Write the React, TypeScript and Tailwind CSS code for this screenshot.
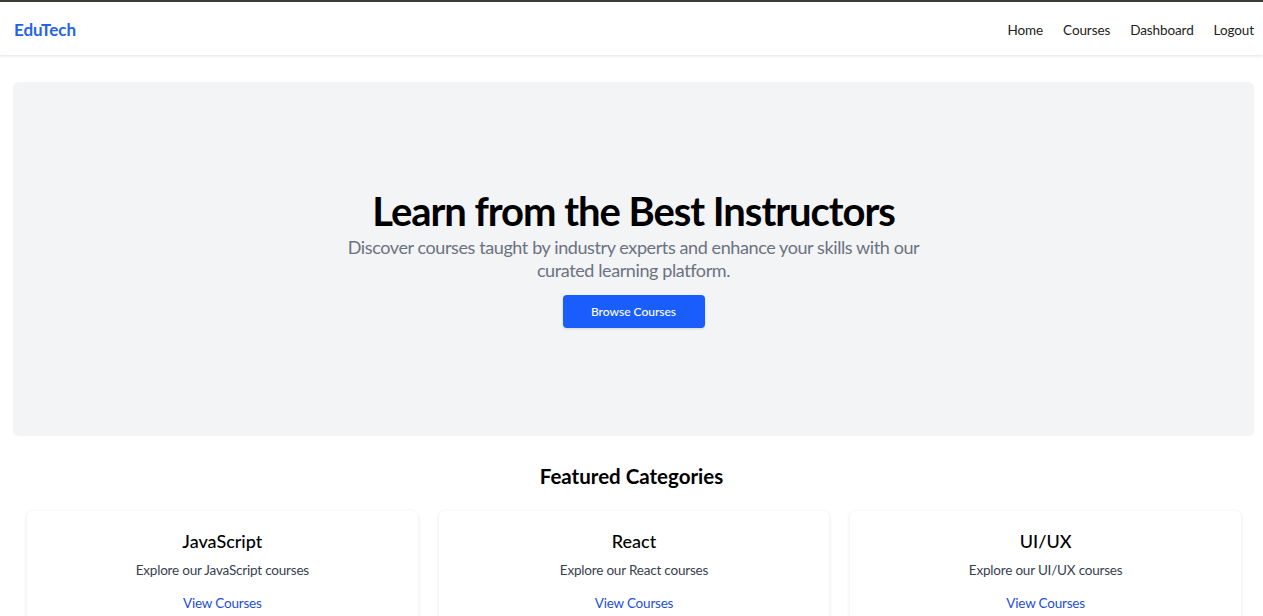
export default function App() {
  const categories = ['JavaScript', 'React', 'UI/UX'];

  return (
    <div className="min-h-screen bg-white font-['Lato',sans-serif] text-black">
      <div className="h-[2px] bg-[#3b3d39]" />
      <nav className="flex h-[53px] items-center justify-between bg-white pl-[14px] pr-[9px] shadow-[0_1px_3px_rgba(0,0,0,0.12)]">
        <a href="#" className="mt-[2px] text-[17px] font-bold text-[#2563eb]">EduTech</a>
        <div className="mt-[4px] flex items-center gap-[20px] text-[13.5px] tracking-[-0.1px] text-[#222]">
          <a href="#">Home</a>
          <a href="#">Courses</a>
          <a href="#">Dashboard</a>
          <a href="#">Logout</a>
        </div>
      </nav>

      <section className="ml-[13px] mr-[9px] mt-[27px] flex h-[353px] flex-col items-center justify-center rounded-md bg-[#f3f4f6] pb-[2px] text-center shadow-[0_1px_2px_rgba(0,0,0,0.06)]">
        <h1 className="text-[40px] font-bold leading-[48px] tracking-[-1.05px]">Learn from the Best Instructors</h1>
        <p className="mt-[1px] max-w-[590px] text-[18px] leading-[23px] tracking-[-0.4px] text-[#6b7280]">
          Discover courses taught by industry experts and enhance your skills with our curated learning platform.
        </p>
        <button className="mt-[13px] h-[33px] w-[142px] rounded-[4px] bg-[#1a5dfd] text-[12px] font-medium text-white shadow-sm">
          Browse Courses
        </button>
      </section>

      <section className="mt-[27px]">
        <h2 className="text-center text-[20.5px] font-bold leading-[28px]">Featured Categories</h2>
        <div className="ml-[27px] mr-[22px] mt-[21px] grid grid-cols-3 gap-[21px]">
          {categories.map((c) => (
            <div key={c} className="flex flex-col items-center rounded-md bg-white pb-6 pt-[17px] shadow-[0_1px_4px_rgba(0,0,0,0.1)]">
              <h3 className="text-[18px] font-medium leading-[26px]">{c}</h3>
              <p className="mt-[6px] text-[13.5px] leading-[20px] tracking-[-0.2px] text-[#374151]">Explore our {c} courses</p>
              <a href="#" className="mt-[13px] text-[13.5px] leading-[20px] tracking-[-0.2px] text-[#1d4ed8]">View Courses</a>
            </div>
          ))}
        </div>
      </section>
    </div>
  );
}
